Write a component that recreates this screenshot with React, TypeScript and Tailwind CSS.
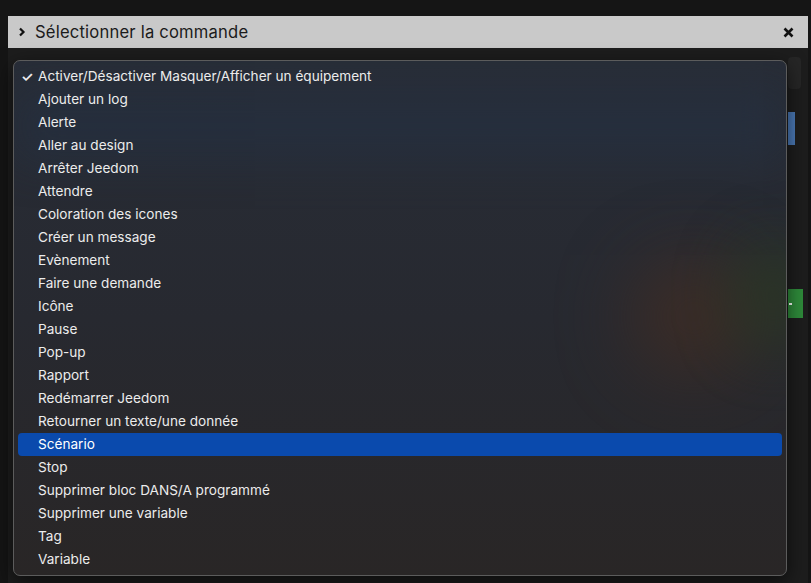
import { useState } from "react";

const ACTIONS = [
  "Activer/Désactiver Masquer/Afficher un équipement",
  "Ajouter un log",
  "Alerte",
  "Aller au design",
  "Arrêter Jeedom",
  "Attendre",
  "Coloration des icones",
  "Créer un message",
  "Evènement",
  "Faire une demande",
  "Icône",
  "Pause",
  "Pop-up",
  "Rapport",
  "Redémarrer Jeedom",
  "Retourner un texte/une donnée",
  "Scénario",
  "Stop",
  "Supprimer bloc DANS/A programmé",
  "Supprimer une variable",
  "Tag",
  "Variable",
];

export default function App() {
  const [checked] = useState(0);
  const [hovered, setHovered] = useState(16);

  return (
    <div className="h-[583px] w-[811px] overflow-hidden bg-[#151515] pt-4 pl-2 font-['Inter','Noto_Sans',sans-serif]">
      <div className="flex h-[567px] w-[800px] flex-col">
        {/* Header */}
        <div className="flex h-8 shrink-0 items-center bg-[#c9c9c9] pl-[10px] pr-[14px] text-[#1b1b1b]">
          <svg width="8" height="10" viewBox="0 0 8 10" className="mr-[9px]">
            <path d="M2 1.5 L5.5 5 L2 8.5" fill="none" stroke="#111" strokeWidth="2.2" />
          </svg>
          <span className="text-[16.6px] tracking-[0.2px]">Sélectionner la commande</span>
          <svg width="11" height="11" viewBox="0 0 11 11" className="ml-auto">
            <path d="M1.5 1.5 L9.5 9.5 M9.5 1.5 L1.5 9.5" stroke="#111" strokeWidth="2.6" />
          </svg>
        </div>

        {/* Body */}
        <div className="relative flex flex-1 justify-end bg-[#1d1d1d]">
          {/* content underneath the dropdown */}
          <div className="flex w-5 flex-col pt-[9px]">
            <div className="h-8 w-[13px] self-end rounded-sm bg-[#262626] mr-[7px]" />
            <div className="mt-[23px] h-[33px] w-[7px] bg-[#4a78b5]" />
            <div className="mt-[144px] flex h-[29px] w-[15px] items-center bg-[#2e8a3a]">
              <span className="ml-[1px] h-[2px] w-[3px] bg-white" />
            </div>
          </div>

          {/* Dropdown */}
          <div className="absolute left-[5px] top-3 h-[516px] w-[774px] overflow-hidden rounded-[7px] border border-[#5c5c5c] bg-gradient-to-b from-[#282d37] via-[#272930] to-[#292626] shadow-[0_6px_20px_rgba(0,0,0,0.6)]">
            <div className="pointer-events-none absolute left-0 top-[30px] h-[70px] w-full bg-[#243042] opacity-60 blur-[22px]" />
            <div className="pointer-events-none absolute left-[620px] top-[200px] h-[110px] w-[120px] rounded-full bg-[#4a2e1f] opacity-70 blur-[40px]" />
            <div className="pointer-events-none absolute left-[720px] top-[180px] h-[110px] w-[80px] rounded-full bg-[#2a3a22] opacity-70 blur-[30px]" />

            <ul className="relative flex flex-col px-1 pt-[4px] text-[13.6px] text-[#ececec]">
              {ACTIONS.map((label, i) => (
                <li
                  key={label}
                  onMouseEnter={() => setHovered(i)}
                  className={`flex h-[23px] items-center rounded-[4px] ${
                    hovered === i ? "bg-[#0a4aad] text-white" : ""
                  }`}
                >
                  <span className="w-5 pl-[3px] text-[14px] font-semibold">{checked === i ? "✓" : ""}</span>
                  <span>{label}</span>
                </li>
              ))}
            </ul>
          </div>
        </div>
      </div>
    </div>
  );
}
